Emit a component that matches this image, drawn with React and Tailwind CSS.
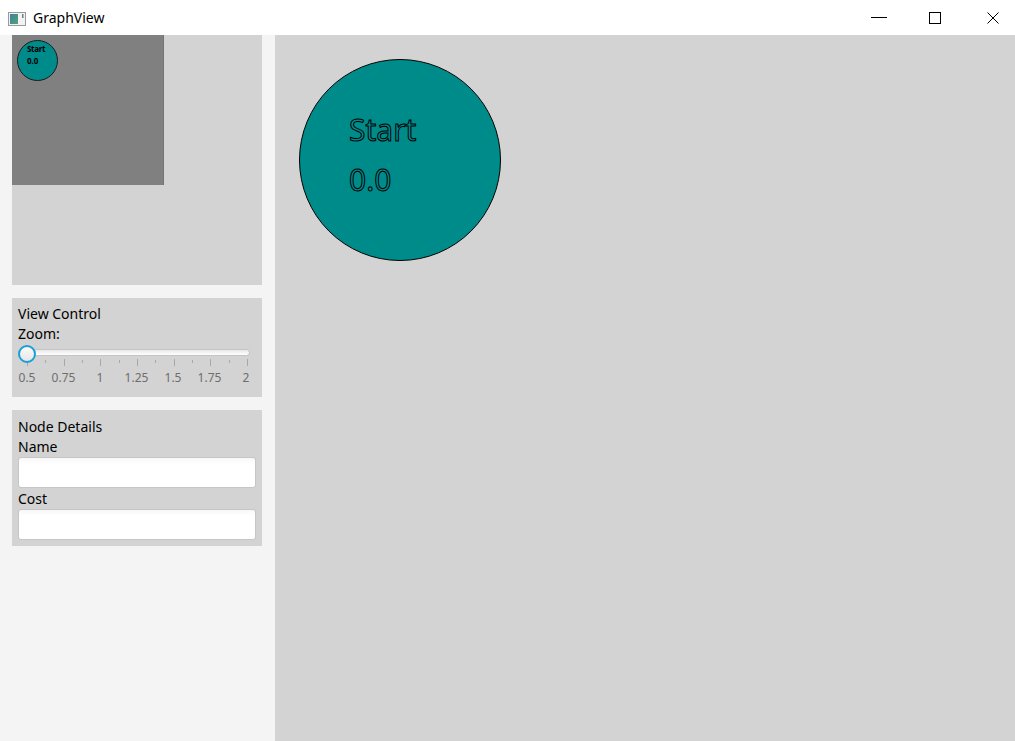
import React from "react";

const font = { fontFamily: '"Noto Sans", "Open Sans", sans-serif' };

function WindowIcon() {
  return (
    <svg width="18" height="14" viewBox="0 0 18 14">
      <defs>
        <linearGradient id="ico" x1="0" y1="0" x2="1" y2="1">
          <stop offset="0" stopColor="#3f7fa0" />
          <stop offset="1" stopColor="#4fa37a" />
        </linearGradient>
      </defs>
      <rect x="0.5" y="0.5" width="17" height="13" fill="#f2f2f2" stroke="#9a9a9a" />
      <rect x="2" y="2" width="8" height="10" fill="url(#ico)" />
      <rect x="14" y="2" width="1.5" height="4" fill="#6b7f8a" />
    </svg>
  );
}

function TitleBar() {
  return (
    <div className="flex h-[35px] items-center bg-white">
      <div className="ml-[8px] mt-[2px]">
        <WindowIcon />
      </div>
      <span className="ml-[7px] text-[14px] text-black" style={font}>
        GraphView
      </span>
      <div className="ml-auto flex items-center pr-[16px]">
        <svg width="16" height="2" viewBox="0 0 16 2">
          <rect x="0" y="0" width="16" height="1" fill="#000" />
        </svg>
        <svg className="ml-[42px]" width="12" height="12" viewBox="0 0 12 12">
          <rect x="0.5" y="0.5" width="11" height="11" fill="none" stroke="#000" />
        </svg>
        <svg className="ml-[46px]" width="12" height="12" viewBox="0 0 12 12">
          <path d="M0.5 0.5 L11.5 11.5 M11.5 0.5 L0.5 11.5" stroke="#000" strokeWidth="1" />
        </svg>
      </div>
    </div>
  );
}

function Minimap() {
  return (
    <div className="h-[250px] w-[250px] bg-[#d3d3d3]">
      <div className="relative h-[150px] w-[152px] border-r border-[#747474] bg-[#808080]">
        <div className="absolute left-[5px] top-[5px] h-[41px] w-[41px] rounded-full border border-[#1a1a1a] bg-[#008b8b]">
          <div className="pl-[9px] pt-[2px] text-[8px] font-bold leading-[12px] text-black" style={font}>
            <div className="tracking-[-0.3px]">Start</div>
            <div>0.0</div>
          </div>
        </div>
      </div>
    </div>
  );
}

const labels = ["0.5", "0.75", "1", "1.25", "1.5", "1.75", "2"];

function ZoomSlider() {
  const step = 220 / 6;
  return (
    <div className="mt-[3px]">
      <div className="relative ml-[1px] h-[14px] w-[231px]">
        <div className="absolute left-0 top-[4px] h-[7px] w-[231px] rounded-full border border-[#c4c4c4] bg-gradient-to-b from-[#e8e8e8] to-white" />
        <div className="absolute left-[-1px] top-0 h-[18px] w-[18px] rounded-full border-2 border-[#1a9ed9] bg-gradient-to-b from-[#fafafa] to-[#e6e6e6]" />
      </div>
      <svg className="ml-[1px] block" width="236" height="7" viewBox="0 0 236 7">
        {Array.from({ length: 13 }).map((_, i) => {
          const x = 8.5 + Math.round((i * step) / 2);
          const major = i % 2 === 0;
          return (
            <line
              key={i}
              x1={x}
              x2={x}
              y1={major ? 0 : 1}
              y2={major ? 7 : 4}
              stroke="#a8a8a8"
              strokeWidth="1"
            />
          );
        })}
      </svg>
      <div className="mt-[4px] flex w-[236px] justify-between pl-[1px] text-[12px] leading-[16px] text-[#6e6e6e]" style={font}>
        {labels.map((l) => (
          <div key={l} className="flex w-[16px] justify-center whitespace-nowrap">
            {l}
          </div>
        ))}
      </div>
    </div>
  );
}

function ViewControl() {
  return (
    <div className="mt-[13px] h-[99px] w-[250px] bg-[#d3d3d3] px-[6px] pt-[7px]">
      <div className="text-[14px] leading-[17px] text-black" style={font}>View Control</div>
      <div className="mt-[3px] text-[14px] leading-[17px] text-black" style={font}>Zoom:</div>
      <ZoomSlider />
    </div>
  );
}

function Field({ label }) {
  return (
    <>
      <div className="text-[14px] leading-[17px] text-black" style={font}>{label}</div>
      <div className="mt-[2px] h-[31px] w-[238px] rounded-[3px] border border-[#c6c6c6] bg-gradient-to-b from-[#f7f7f7] to-white to-[20%]" />
    </>
  );
}

function NodeDetails() {
  return (
    <div className="mt-[13px] h-[136px] w-[250px] bg-[#d3d3d3] px-[6px] pt-[8px]">
      <div className="mb-[3px] text-[14px] leading-[17px] text-black" style={font}>Node Details</div>
      <Field label="Name" />
      <div className="mt-[2px]">
        <Field label="Cost" />
      </div>
    </div>
  );
}

function Canvas() {
  return (
    <div className="relative flex-1 bg-[#d3d3d3]">
      <div className="absolute left-[24px] top-[24px] h-[202px] w-[202px] rounded-full border border-black bg-[#008b8b]">
        <div
          className="pl-[49px] pt-[45px] text-[30px] leading-[50px] text-transparent [-webkit-text-stroke:1px_#000]"
          style={font}
        >
          <div>Start</div>
          <div>0.0</div>
        </div>
      </div>
    </div>
  );
}

export default function App() {
  return (
    <div className="flex h-[741px] w-[1015px] flex-col overflow-hidden">
      <TitleBar />
      <div className="flex flex-1">
        <div className="w-[275px] bg-[#f4f4f4] pl-[12px]">
          <Minimap />
          <ViewControl />
          <NodeDetails />
        </div>
        <Canvas />
      </div>
    </div>
  );
}
